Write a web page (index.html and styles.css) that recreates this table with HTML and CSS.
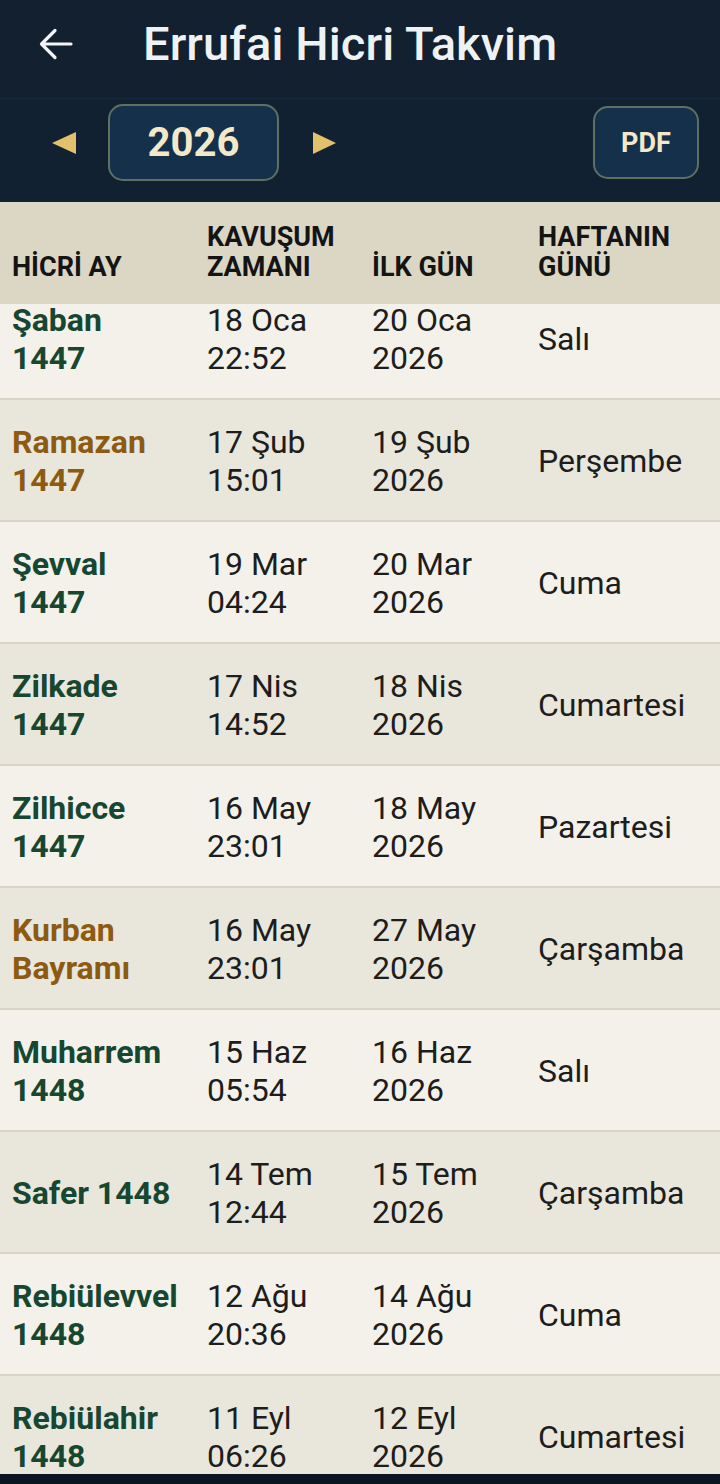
FILE: index.html
```html
<!DOCTYPE html>
<html lang="tr">
<head>
<meta charset="utf-8">
<title>Errufai Hicri Takvim</title>
<link rel="stylesheet" href="styles.css">
</head>
<body>
<div class="screen">
  <header class="appbar">
    <button class="back" aria-label="Geri">
      <svg width="34" height="32" viewBox="0 0 34 32"><path d="M32 16H3M16 2.5L2.5 16L16 29.5" fill="none" stroke="#f2f4f5" stroke-width="3.2" stroke-linecap="round" stroke-linejoin="round"/></svg>
    </button>
    <h1 class="title">Errufai Hicri Takvim</h1>
  </header>
  <div class="toolbar">
    <div class="yearnav">
      <span class="tri tri-left"></span>
      <div class="yearbox">2026</div>
      <span class="tri tri-right"></span>
    </div>
    <button class="pdf">PDF</button>
  </div>
  <div class="table">
    <div class="thead">
      <div class="th">HİCRİ AY</div>
      <div class="th">KAVUŞUM<br>ZAMANI</div>
      <div class="th">İLK GÜN</div>
      <div class="th">HAFTANIN<br>GÜNÜ</div>
    </div>
    <div class="tbody">
      <div class="row odd"><div class="c month green">Şaban<br>1447</div><div class="c">18 Oca<br>22:52</div><div class="c">20 Oca<br>2026</div><div class="c day">Salı</div></div>
      <div class="row even"><div class="c month gold">Ramazan<br>1447</div><div class="c">17 Şub<br>15:01</div><div class="c">19 Şub<br>2026</div><div class="c day">Perşembe</div></div>
      <div class="row odd"><div class="c month green">Şevval<br>1447</div><div class="c">19 Mar<br>04:24</div><div class="c">20 Mar<br>2026</div><div class="c day">Cuma</div></div>
      <div class="row even"><div class="c month green">Zilkade<br>1447</div><div class="c">17 Nis<br>14:52</div><div class="c">18 Nis<br>2026</div><div class="c day">Cumartesi</div></div>
      <div class="row odd"><div class="c month green">Zilhicce<br>1447</div><div class="c">16 May<br>23:01</div><div class="c">18 May<br>2026</div><div class="c day">Pazartesi</div></div>
      <div class="row even"><div class="c month gold">Kurban<br>Bayramı</div><div class="c">16 May<br>23:01</div><div class="c">27 May<br>2026</div><div class="c day">Çarşamba</div></div>
      <div class="row odd"><div class="c month green">Muharrem<br>1448</div><div class="c">15 Haz<br>05:54</div><div class="c">16 Haz<br>2026</div><div class="c day">Salı</div></div>
      <div class="row even"><div class="c month green">Safer 1448</div><div class="c">14 Tem<br>12:44</div><div class="c">15 Tem<br>2026</div><div class="c day">Çarşamba</div></div>
      <div class="row odd"><div class="c month green">Rebiülevvel<br>1448</div><div class="c">12 Ağu<br>20:36</div><div class="c">14 Ağu<br>2026</div><div class="c day">Cuma</div></div>
      <div class="row even"><div class="c month green">Rebiülahir<br>1448</div><div class="c">11 Eyl<br>06:26</div><div class="c">12 Eyl<br>2026</div><div class="c day">Cumartesi</div></div>
    </div>
  </div>
  <div class="navbar"></div>
</div>
</body>
</html>
```
FILE: styles.css
```css
* { box-sizing: border-box; }
html, body { margin: 0; padding: 0; }
body {
  width: 720px;
  height: 1484px;
  overflow: hidden;
  font-family: Roboto, "Liberation Sans", sans-serif;
  background: #12202f;
}
.screen {
  width: 720px;
  height: 1484px;
  display: flex;
  flex-direction: column;
  overflow: hidden;
}
.appbar {
  height: 98px;
  flex: none;
  background: #12202f;
  display: flex;
  align-items: center;
  padding-left: 39px;
}
.back {
  border: 0;
  background: none;
  padding: 0;
  width: 34px;
  height: 32px;
  display: flex;
  margin-top: -11px;
}
.title {
  margin: -11px 0 0 70px;
  font-size: 47px;
  font-weight: 500;
  color: #eef2f5;
  letter-spacing: 0.1px;
}
.toolbar {
  height: 104px;
  flex: none;
  background: #122132;
  border-top: 1px solid #17283a;
  display: flex;
  align-items: center;
  justify-content: space-between;
  padding: 0 21px 16px 52px;
}
.yearnav {
  display: flex;
  align-items: center;
}
.tri {
  width: 0;
  height: 0;
  border-top: 11px solid transparent;
  border-bottom: 11px solid transparent;
}
.tri-left { border-right: 24px solid #e3c06b; margin-right: 32px; }
.tri-right { border-left: 23px solid #e3c06b; margin-left: 34px; }
.yearbox {
  width: 171px;
  height: 77px;
  border: 2px solid #5d7163;
  border-radius: 15px;
  background: #14304b;
  color: #f3e9c9;
  font-size: 40px;
  font-weight: 700;
  display: flex;
  align-items: center;
  justify-content: center;
}
.pdf {
  width: 106px;
  height: 73px;
  border: 2px solid #5d7163;
  border-radius: 15px;
  background: #14304b;
  color: #f3e9c9;
  font-family: Roboto, "Liberation Sans", sans-serif;
  font-size: 27px;
  font-weight: 700;
  padding: 0;
}
.table {
  flex: 1;
  display: flex;
  flex-direction: column;
  overflow: hidden;
  background: #f3f1ea;
}
.thead, .row {
  display: grid;
  grid-template-columns: 207px 165px 166px 1fr;
}
.thead {
  position: relative;
  z-index: 2;
  height: 102px;
  flex: none;
  background: #dcd7c5;
  align-items: end;
  padding-bottom: 22px;
}
.th {
  font-size: 27px;
  font-weight: 700;
  color: #141414;
  line-height: 30px;
}
.th:first-child { padding-left: 12px; }
.tbody {
  margin-top: -26px;
}
.row {
  height: 122px;
  align-items: center;
  border-bottom: 2px solid #d9d4c7;
}
.row.odd { background: #f3f1ea; }
.row.even { background: #e9e6dc; }
.c {
  font-size: 32px;
  line-height: 38px;
  color: #1d1d1d;
  padding-top: 1px;
}
.c:first-child { padding-left: 12px; }
.month { font-weight: 700; }
.green { color: #174631; }
.gold { color: #8c5a10; }
.navbar {
  height: 10px;
  flex: none;
  background: #0b1622;
}
```
